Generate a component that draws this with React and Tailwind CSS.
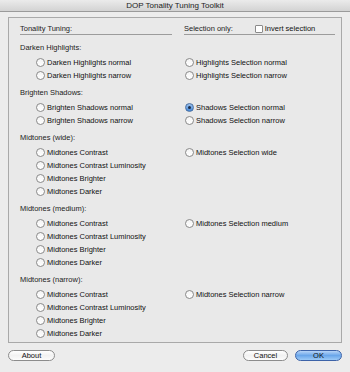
const groups = [
  {
    title: 'Darken Highlights:',
    rows: [
      ['Darken Highlights normal', 'Highlights Selection normal'],
      ['Darken Highlights narrow', 'Highlights Selection narrow'],
    ],
  },
  {
    title: 'Brighten Shadows:',
    rows: [
      ['Brighten Shadows normal', 'Shadows Selection normal'],
      ['Brighten Shadows narrow', 'Shadows Selection narrow'],
    ],
  },
  {
    title: 'Midtones (wide):',
    rows: [
      ['Midtones Contrast', 'Midtones Selection wide'],
      ['Midtones Contrast Luminosity'],
      ['Midtones Brighter'],
      ['Midtones Darker'],
    ],
  },
  {
    title: 'Midtones (medium):',
    rows: [
      ['Midtones Contrast', 'Midtones Selection medium'],
      ['Midtones Contrast Luminosity'],
      ['Midtones Brighter'],
      ['Midtones Darker'],
    ],
  },
  {
    title: 'Midtones (narrow):',
    rows: [
      ['Midtones Contrast', 'Midtones Selection narrow'],
      ['Midtones Contrast Luminosity'],
      ['Midtones Brighter'],
      ['Midtones Darker'],
    ],
  },
]

function Radio({ label, checked }) {
  return (
    <div className="flex items-center h-[13px]">
      {checked ? (
        <span className="w-[9px] h-[9px] rounded-full border border-[#4a6fa0] bg-gradient-to-b from-[#9ec3ee] to-[#3f86d8] flex items-center justify-center shrink-0">
          <span className="w-[3px] h-[3px] rounded-full bg-[#1c2b44]" />
        </span>
      ) : (
        <span className="w-[9px] h-[9px] rounded-full border border-[#8a8a8a] bg-gradient-to-b from-[#f4f4f4] to-[#ffffff] shrink-0" />
      )}
      <span className="ml-[2px] text-[#111] whitespace-nowrap">{label}</span>
    </div>
  )
}

function Button({ children, primary, className }) {
  return (
    <div
      className={`h-[11px] rounded-full border flex items-center justify-center ${
        primary
          ? 'border-[#3d63a8] bg-gradient-to-b from-[#b7d4f7] via-[#6aa6ea] to-[#9ccaf7]'
          : 'border-[#8c8c8c] bg-gradient-to-b from-[#ffffff] via-[#f2f2f2] to-[#fcfcfc]'
      } ${className}`}
    >
      <span className="text-[#111]">{children}</span>
    </div>
  )
}

export default function App() {
  return (
    <div
      className="w-[350px] h-[372px] bg-[#ececec] overflow-hidden text-[7.5px] leading-[13px]"
      style={{ fontFamily: '"Liberation Sans", Arial, sans-serif' }}
    >
      <div className="h-[12px] bg-gradient-to-b from-[#ebebeb] to-[#d3d3d3] border-b border-[#9a9a9a] flex items-center justify-center">
        <span className="text-[#222] leading-none text-[8px]">DOP Tonality Tuning Toolkit</span>
      </div>

      <div className="mx-[8px] mt-[5px] h-[326px] border border-[#a9a9a9] bg-[#e9e9e9] pl-[11px] pr-[6px] pt-[4px]">
        <div className="flex">
          <div className="w-[152px]">
            <div className="h-[13px] text-[#222]">Tonality Tuning:</div>
          </div>
          <div className="ml-[12px] flex-1 flex">
            <span className="h-[13px] text-[#222]">Selection only:</span>
            <div className="ml-[22px] flex items-center h-[13px]">
              <span className="w-[8px] h-[8px] border border-[#8a8a8a] bg-white rounded-[1px]" />
              <span className="ml-[2px] text-[#111]">Invert selection</span>
            </div>
          </div>
        </div>
        <div className="flex mt-[-1px]">
          <div className="w-[152px] border-t border-[#9c9c9c]" />
          <div className="ml-[12px] flex-1 border-t border-[#9c9c9c]" />
        </div>

        <div className="mt-[6px]">
          {groups.map((g, gi) => (
            <div key={gi} className={gi > 0 ? 'mt-[4px]' : ''}>
              <div className="h-[13px] text-[#222]">{g.title}</div>
              <div className="mt-[2px]">
                {g.rows.map((r, ri) => (
                  <div key={ri} className="flex">
                    <div className="w-[164px] pl-[16px]">
                      <Radio label={r[0]} />
                    </div>
                    <div className="pl-[1px]">
                      {r[1] && <Radio label={r[1]} checked={r[1] === 'Shadows Selection normal'} />}
                    </div>
                  </div>
                ))}
              </div>
            </div>
          ))}
        </div>
      </div>

      <div className="flex items-center mt-[7px] px-[8px]">
        <Button className="w-[47px]">About</Button>
        <div className="flex-1" />
        <Button className="w-[45px]">Cancel</Button>
        <Button primary className="w-[47px] ml-[7px]">OK</Button>
      </div>
    </div>
  )
}
